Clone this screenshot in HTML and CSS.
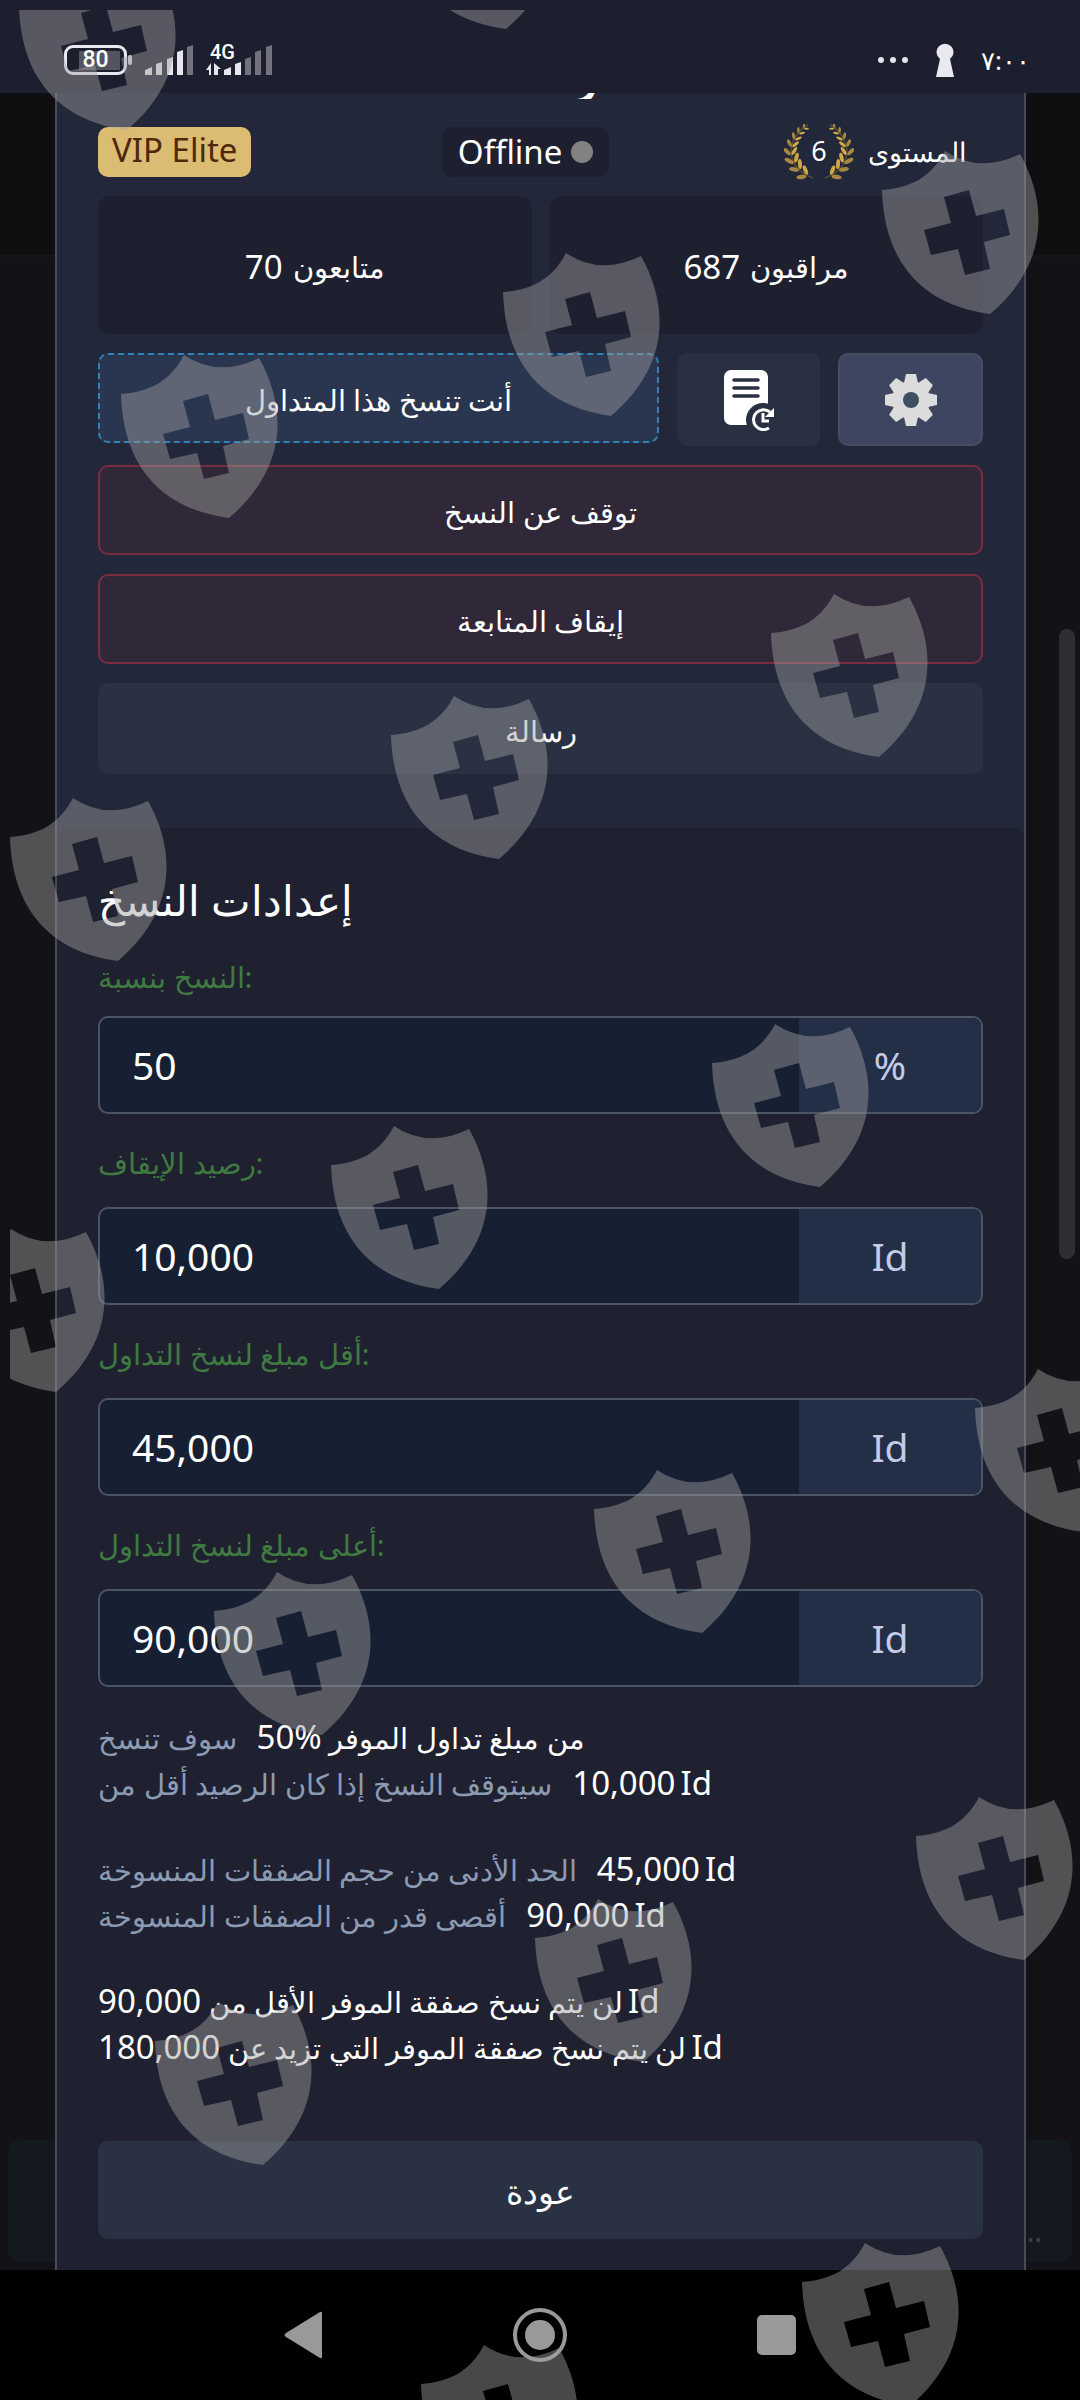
FILE: index.html
```html
<!DOCTYPE html>
<html lang="ar" dir="ltr">
<head>
<meta charset="utf-8">
<meta name="viewport" content="width=device-width">
<title>إعدادات النسخ</title>
<link rel="stylesheet" href="styles.css">
</head>
<body>
<header class="status">
  <div class="status-group">
    <div class="battery"><span class="battery-text">80</span></div>
    <svg class="signal" width="50" height="32" viewBox="0 0 50 32" fill="#e6e6ec">
      <path d="M0 31v-5l7-3v8zM11 31V20l6-2v13zM22 31V15l6-2v18zM32 31V8l6-2v25z"/>
      <path d="M42 31V3l6-2v30z" fill="#73737f"/>
    </svg>
    <div class="mobile">
      <span class="mobile-text">4G</span>
      <svg class="mobile-bars" width="68" height="32" viewBox="0 0 68 32" fill="#e6e6ec">
        <path d="M0 26l5-7v12H3v-5zM8 31V19l7 6h-3v6zM18 31v-5l7-3v8zM29 31V20l6-2v13z"/>
        <path d="M39 31V15l6-2v18zM49 31V8l6-2v25zM60 31V3l6-2v30z" fill="#73737f"/>
      </svg>
    </div>
  </div>
  <div class="status-group status-right">
    <svg width="32" height="8" viewBox="0 0 32 8" fill="#e6e6ec"><circle cx="4" cy="4" r="3"/><circle cx="16" cy="4" r="3"/><circle cx="28" cy="4" r="3"/></svg>
    <svg width="20" height="34" viewBox="0 0 20 34" fill="#e9e9ef"><path d="M5 16a8.500 8.500 0 1 1 10 0l4 18H1z"/></svg>
    <span class="clock">٧:٠٠</span>
  </div>
</header>

<main class="screen">
  <div class="backdrop-line"></div>
  <div class="backdrop-box">...</div>
  <section class="dialog">
    <div class="profile">
      <div class="name">ر</div>
      <div class="badges">
        <span class="vip">VIP Elite</span>
        <span class="presence">Offline<i class="dot"></i></span>
        <span class="level">
          <span class="laurel">
            <svg width="70" height="56" viewBox="0 0 70 56">
              <defs>
                <g id="pair"><ellipse cx="-4" cy="-3" rx="2.200" ry="5" transform="rotate(-38 -4 -3)" fill="#a88742"/><ellipse cx="4" cy="-3" rx="2" ry="5" transform="rotate(38 4 -3)" fill="#cfa648"/></g>
                <g id="branch">
                  <path d="M29 54Q8 46 7 28Q8 10 24 1" fill="none" stroke="#57502f" stroke-width="1.500"/>
                  <use href="#pair" transform="translate(22 51) rotate(-60)"/>
                  <use href="#pair" transform="translate(15 45) rotate(-42)"/>
                  <use href="#pair" transform="translate(10 38) rotate(-24)"/>
                  <use href="#pair" transform="translate(7 30) rotate(-6) scale(.9)"/>
                  <use href="#pair" transform="translate(8 22) rotate(12) scale(.8)"/>
                  <use href="#pair" transform="translate(11 15) rotate(28) scale(.7)"/>
                  <use href="#pair" transform="translate(15 9) rotate(40) scale(.6)"/>
                  <use href="#pair" transform="translate(20 4) rotate(52) scale(.5)"/>
                </g>
              </defs>
              <use href="#branch"/>
              <use href="#branch" transform="translate(70 0) scale(-1 1)"/>
            </svg>
            <span class="laurel-num">6</span>
          </span>
          المستوى
        </span>
      </div>
      <div class="stats">
        <div class="stat"><span class="num">70</span><span>متابعون</span></div>
        <div class="stat"><span class="num">687</span><span>مراقبون</span></div>
      </div>
      <div class="actions">
        <button class="btn copying" type="button">أنت تنسخ هذا المتداول</button>
        <button class="icon-btn" type="button" aria-label="سجل">
          <svg width="54" height="62" viewBox="0 0 54 62">
            <rect x="2" y="1" width="44" height="55" rx="7" fill="#fff"/>
            <path d="M12 11h24M12 19h24M12 27h24" stroke="#293042" stroke-width="3.500" stroke-linecap="round"/>
            <circle cx="41" cy="51" r="17" fill="#293042"/>
            <path d="M47 59A10 10 0 1 1 48 43" fill="none" stroke="#fff" stroke-width="3"/>
            <path d="M52 39v9h-9z" fill="#fff"/>
            <path d="M41 44v8h6" fill="none" stroke="#fff" stroke-width="3"/>
          </svg>
        </button>
        <button class="icon-btn settings-btn" type="button" aria-label="إعدادات">
          <svg width="52" height="52" viewBox="-26 -26 52 52">
            <g fill="#dcdcdc">
              <circle r="19"/>
              <g id="teeth"><path id="tooth" d="M-7-17l2-9H5l2 9zM-7 17l2 9H5l2-9z"/><use href="#tooth" transform="rotate(90)"/></g>
              <use href="#teeth" transform="rotate(45)"/>
            </g>
            <circle r="8" fill="#3e4f63"/>
          </svg>
        </button>
      </div>
      <button class="btn danger" type="button">توقف عن النسخ</button>
      <button class="btn danger" type="button">إيقاف المتابعة</button>
      <button class="btn plain" type="button">رسالة</button>
    </div>

    <form class="settings">
      <h2 class="title">إعدادات النسخ</h2>
      <label class="label" for="ratio">النسخ بنسبة:</label>
      <div class="field"><input class="input" id="ratio" value="50"><span class="unit">%</span></div>
      <label class="label" for="stop">رصيد الإيقاف:</label>
      <div class="field"><input class="input" id="stop" value="10,000"><span class="unit">Id</span></div>
      <label class="label" for="min">أقل مبلغ لنسخ التداول:</label>
      <div class="field"><input class="input" id="min" value="45,000"><span class="unit">Id</span></div>
      <label class="label" for="max">أعلى مبلغ لنسخ التداول:</label>
      <div class="field"><input class="input" id="max" value="90,000"><span class="unit">Id</span></div>

      <div class="summary">
        <div class="group">
          <p class="line"><span class="muted">سوف تنسخ</span><span><span class="num">50%</span> من مبلغ تداول الموفر</span></p>
          <p class="line"><span class="muted">سيتوقف النسخ إذا كان الرصيد أقل من</span><span class="amount num"><span>10,000</span><span>Id</span></span></p>
        </div>
        <div class="group">
          <p class="line"><span class="muted">الحد الأدنى من حجم الصفقات المنسوخة</span><span class="amount num"><span>45,000</span><span>Id</span></span></p>
          <p class="line"><span class="muted">أقصى قدر من الصفقات المنسوخة</span><span class="amount num"><span>90,000</span><span>Id</span></span></p>
        </div>
        <div class="group">
          <p class="line amount"><span>لن يتم نسخ صفقة الموفر الأقل من <span class="num">90,000</span></span><span class="num">Id</span></p>
          <p class="line amount"><span>لن يتم نسخ صفقة الموفر التي تزيد عن <span class="num">180,000</span></span><span class="num">Id</span></p>
        </div>
      </div>
      <button class="btn plain back" type="button">عودة</button>
    </form>
  </section>
  <div class="scrollbar"></div>
</main>

<nav class="navbar">
  <button class="nav-btn" type="button" aria-label="رجوع"><svg width="56" height="56" viewBox="0 0 56 56"><path d="M46 6v44q0 2-2 1L10 30q-3-2 0-4L44 5q2-1 2 1z" fill="#999"/></svg></button>
  <button class="nav-btn" type="button" aria-label="الرئيسية"><svg width="56" height="56" viewBox="0 0 56 56"><circle cx="28" cy="28" r="25" fill="none" stroke="#999" stroke-width="4"/><circle cx="28" cy="28" r="15" fill="#999"/></svg></button>
  <button class="nav-btn" type="button" aria-label="التطبيقات"><svg width="56" height="56" viewBox="0 0 56 56"><rect x="9" y="8" width="39" height="40" rx="5" fill="#999"/></svg></button>
</nav>

<div class="watermark" aria-hidden="true">
  <svg class="watermark-art">
    <defs>
      <path id="shield" fill-rule="evenodd" d="M63 0Q97 23 138 3C166 53 167 113 108 163C40 154 2 111 0 39C30 37 50 25 63 0ZM62 46L87 39L94 65L122 58L128 84L102 91L108 118L83 124L76 98L49 104L42 79L69 72Z"/>
    </defs>
    <g class="shields">
      <use href="#shield" x="9" y="-43"/><use href="#shield" x="388" y="-144"/>
      <use href="#shield" x="872" y="141"/><use href="#shield" x="493" y="243"/>
      <use href="#shield" x="111" y="345"/><use href="#shield" x="761" y="584"/>
      <use href="#shield" x="381" y="686"/><use href="#shield" x="0" y="788"/>
      <use href="#shield" x="702" y="1014"/><use href="#shield" x="321" y="1116"/>
      <use href="#shield" x="-62" y="1219"/><use href="#shield" x="965" y="1359"/>
      <use href="#shield" x="584" y="1460"/><use href="#shield" x="204" y="1562"/>
      <use href="#shield" x="906" y="1787"/><use href="#shield" x="525" y="1889"/>
      <use href="#shield" x="145" y="1992"/><use href="#shield" x="792" y="2233"/>
      <use href="#shield" x="411" y="2335"/>
    </g>
  </svg>
</div>
</body>
</html>
```
FILE: styles.css
```css
* { box-sizing: border-box; }

body {
  margin: 0;
  position: relative;
  min-height: 100vh;
  display: flex;
  flex-direction: column;
  background: #111216;
  color: #fff;
  font-family: "Noto Sans", sans-serif;
  font-size: 29px;
  line-height: 46px;
}

button, input {
  font: inherit;
  color: inherit;
  margin: 0;
  padding: 0;
  border: 0;
}

svg { display: block; }

/* Status bar */
.status {
  height: 93px;
  padding: 26px 50px 0 64px;
  display: flex;
  justify-content: space-between;
  align-items: center;
  background: #1d1e2e;
}
.status-group { display: flex; align-items: center; gap: 18px; }
.status-right { gap: 26px; }
.battery {
  position: relative;
  width: 63px;
  height: 30px;
  border: 3px solid #e9e9f4;
  border-radius: 9px;
  display: flex;
  align-items: center;
  justify-content: center;
  font-family: Roboto, sans-serif;
  font-size: 23px;
  font-weight: 500;
  line-height: 26px;
}
.battery::before {
  content: "";
  position: absolute;
  inset: 3px 4px 2px 12px;
  background: #545461;
}
.battery::after {
  content: "";
  position: absolute;
  left: 61px;
  top: 7px;
  width: 4px;
  height: 10px;
  border-radius: 2px;
  background: #d0d0da;
}
.battery-text { position: relative; }
.mobile { position: relative; margin-left: -7px; }
.mobile-text {
  position: absolute;
  left: 4px;
  top: -4px;
  font-family: Roboto, sans-serif;
  font-size: 20px;
  font-weight: 500;
  line-height: 24px;
}
.clock { font-size: 26px; line-height: 32px; }

/* Page behind the dialog */
.screen { position: relative; flex: 1; background: #131317; }
.backdrop-line {
  position: absolute;
  inset: 0 0 auto;
  height: 164px;
  background: #0f0f12;
  border-bottom: 2px solid #15181b;
}
.backdrop-box {
  position: absolute;
  inset: auto 8px 8px;
  height: 122px;
  padding: 68px 30px 0;
  border-radius: 12px;
  background: #14191f;
  color: #3f444c;
  text-align: right;
}
.scrollbar {
  position: absolute;
  right: 5px;
  top: 536px;
  width: 16px;
  height: 630px;
  border-radius: 8px;
  background: #2f2f33;
}

/* Dialog */
.dialog {
  position: relative;
  margin: 0 54px 0 55px;
  border: solid #484b5a;
  border-width: 0 2px;
  background: #22273a;
}
.profile {
  display: flex;
  flex-direction: column;
  gap: 19px;
  padding: 0 41px 54px;
}
.name {
  height: 6px;
  margin-bottom: 9px;
  overflow: hidden;
  display: flex;
  align-items: flex-end;
  justify-content: center;
  padding-left: 92px;
  font-size: 44px;
  font-weight: 700;
}
.badges {
  display: grid;
  grid-template-columns: 1fr auto 1.04fr;
  grid-template-rows: 50px;
  align-items: center;
  padding-right: 16px;
  font-size: 33px;
}
.vip, .presence {
  height: 50px;
  padding: 0 14px;
  border-radius: 10px;
}
.vip { justify-self: start; background: #dcbb73; color: #4e2808; }
.presence {
  display: flex;
  align-items: center;
  gap: 9px;
  padding: 0 16px;
  background: #1e2030;
}
.dot { width: 22px; height: 22px; border-radius: 50%; background: #828282; }
.level {
  justify-self: end;
  display: flex;
  align-items: center;
  gap: 14px;
  font-size: 27px;
}
.laurel { position: relative; }
.laurel-num {
  position: absolute;
  inset: 0;
  text-align: center;
  line-height: 54px;
}
.stats { display: grid; grid-template-columns: 1fr 1fr; gap: 18px; }
.stat {
  height: 138px;
  display: flex;
  align-items: center;
  justify-content: center;
  gap: 10px;
  padding-top: 4px;
  border-radius: 12px;
  background: #1e2030;
}
.num { font-size: 33px; }

.actions {
  display: grid;
  grid-template-columns: 1fr 143px 145px;
  align-items: start;
  gap: 18px;
}
.btn {
  height: 90px;
  padding-top: 4px;
  border-radius: 10px;
  text-align: center;
}
.copying { border: 2px dashed #2f83b8; background: #2a3650; }
.icon-btn {
  height: 93px;
  display: flex;
  align-items: center;
  justify-content: center;
  border-radius: 10px;
  background: #293042;
}
.settings-btn { border: 2px solid #454c64; background: #3e4560; }
.danger { border: 2px solid #7a2d40; background: #302838; }
.plain { height: 91px; background: #293143; }

/* Copy settings */
.settings {
  display: flex;
  flex-direction: column;
  padding: 42px 41px 31px;
  border-radius: 10px 10px 0 0;
  background: #1f2030;
}
.title { margin: 0; font-size: 42px; font-weight: 400; line-height: 60px; }
.label { margin-top: 26px; color: #3f7a40; }
.title + .label { margin: 24px 0 -5px; }
.field {
  height: 98px;
  margin-top: 21px;
  display: flex;
  overflow: hidden;
  border: 2px solid #4a5566;
  border-radius: 10px;
  background: #171f32;
  font-size: 39px;
}
.input { flex: 1; min-width: 0; padding: 0 32px; background: transparent; }
.unit {
  width: 182px;
  background: #232e47;
  color: #c3cbe6;
  text-align: center;
  line-height: 94px;
}
.summary {
  display: flex;
  flex-direction: column;
  gap: 40px;
  padding: 27px 0 71px;
}
.line { height: 46px; margin: 0; display: flex; align-items: baseline; gap: 20px; }
.amount { display: flex; gap: 5px; }
.muted { color: #8b9bb4; }
.back { height: 98px; font-size: 33px; }

/* System navigation */
.navbar {
  height: 130px;
  display: flex;
  align-items: center;
  justify-content: center;
  gap: 180px;
  background: #000;
}
.nav-btn { background: transparent; }

/* Watermark over the whole page */
.watermark {
  position: absolute;
  inset: 10px 0 0 10px;
  overflow: hidden;
  pointer-events: none;
}
.watermark-art { width: 100%; height: 100%; }
.shields { fill: rgba(160, 160, 160, 0.45); }
```
